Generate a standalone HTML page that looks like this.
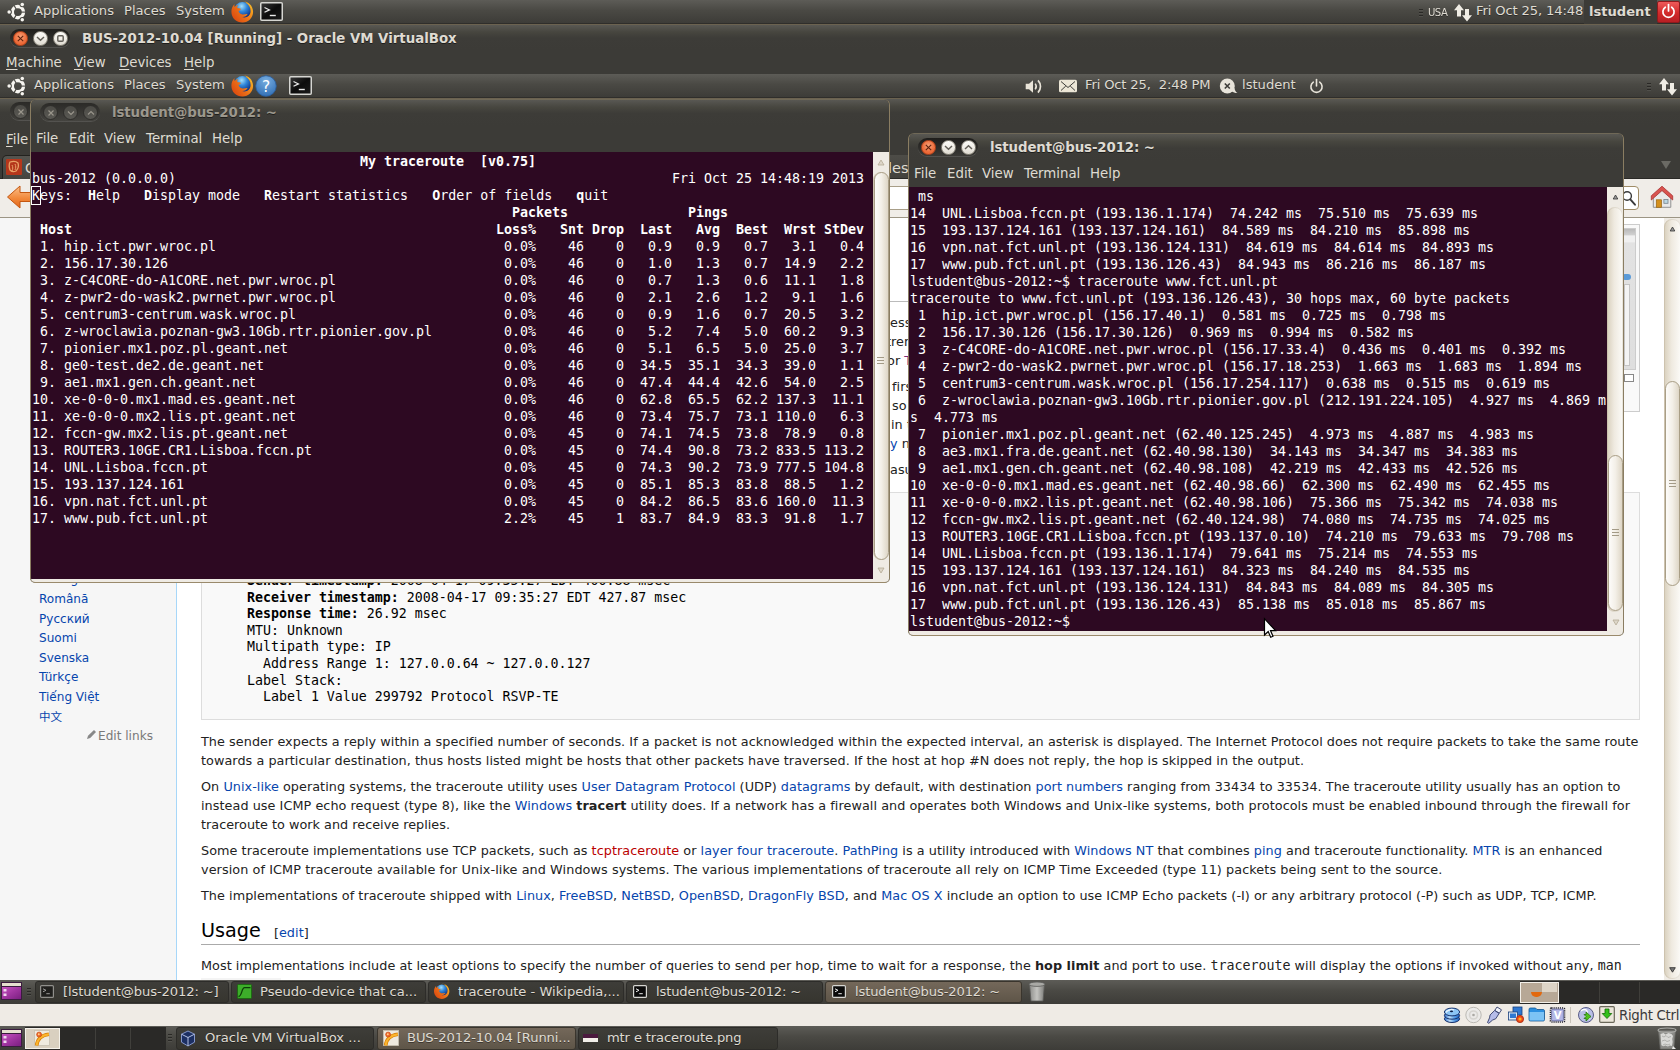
<!DOCTYPE html>
<html><head><meta charset="utf-8"><title>BUS-2012-10.04 [Running] - Oracle VM VirtualBox</title>
<style>
*{box-sizing:border-box}
html,body{margin:0;padding:0;width:1680px;height:1050px;overflow:hidden;background:#3c3b37}
body{position:relative;font-family:"DejaVu Sans","Liberation Sans",sans-serif;font-size:13px;color:#dfdbd2}
.abs{position:absolute}
.panel{position:absolute;left:0;width:1680px;background:linear-gradient(#5d5c57,#4a4944 45%,#3d3c38);}
.ptxt{position:absolute;white-space:nowrap;color:#dfdbd2;font-size:13.1px;line-height:16px;text-shadow:0 1px 0 rgba(0,0,0,.35)}
.tb{position:absolute;background:linear-gradient(#595853,#47463f 28%,#3d3c38 52%,#3c3b37);}
.title{position:absolute;white-space:nowrap;font-weight:bold;font-size:13.33px;line-height:16px;color:#dfdbd2;text-shadow:0 1px 0 rgba(0,0,0,.5)}
.mb{position:absolute;background:#3c3b37}
.mtxt{position:absolute;white-space:nowrap;font-size:13.33px;line-height:16px;color:#dfdbd2}
u{text-decoration:underline;text-underline-offset:2px}
.pill{position:absolute;height:18px;border-radius:10px;background:linear-gradient(#1f1e1c,#3a3935);box-shadow:0 1px 0 rgba(255,255,255,.12)}
.wb{position:absolute;width:15px;height:15px;border-radius:50%;top:1.5px}
.wb.c{background:radial-gradient(circle at 50% 38%,#f8a27a,#ee6f3e 55%,#e25927);border:1px solid #b5441c}
.wb.l{background:linear-gradient(#fcfbf8,#efece5 55%,#dedad0);border:1px solid #8d897e}
.wb.d{background:linear-gradient(#4b4a45,#5a5954);border:1px solid #2f2e2b}
.wb svg{position:absolute;left:0;top:0}
.term{position:absolute;background:#2d0922;color:#fff;font-family:"DejaVu Sans Mono","Liberation Mono",monospace;font-size:13.3px;letter-spacing:-.0054px;line-height:17px;overflow:hidden}
.term .ln{height:17px;white-space:pre}
.term b{font-weight:bold}
.term i{font-style:normal;outline:1px solid #fff;outline-offset:0;display:inline-block;height:17px}
.win{position:absolute;background:#3c3b37;border:1px solid #8a7d62;border-top-color:#6f6857;border-bottom-color:#9a8a6c;border-radius:6px 6px 5px 5px;overflow:hidden}
.sb{position:absolute;background:#efebe4}
.trough{position:absolute;border-radius:8px;background:linear-gradient(90deg,#d8cfbc,#efeae0 45%,#fcfbf8);box-shadow:inset 0 0 0 1px rgba(150,135,105,.18)}
.thumb{position:absolute;border:1px solid #a99e86;border-radius:8px;background:linear-gradient(90deg,#fdfcfa,#f3efe7 50%,#ded6c6)}
.wiki{position:absolute;font-size:12.8px;line-height:19.2px;color:#222;letter-spacing:.055px}
.wiki p{margin:0;position:absolute;white-space:nowrap;left:0}
.wiki a{color:#0645ad;text-decoration:none}
.wiki a.new{color:#ba0000}
.side a{position:absolute;left:39px;color:#0645ad;font-size:12.05px;line-height:16px;white-space:nowrap;text-decoration:none}
.pre{position:absolute;font-family:"DejaVu Sans Mono","Liberation Mono",monospace;font-size:13.288px;line-height:16.6px;color:#000;white-space:pre}
.task{position:absolute;white-space:nowrap;font-size:13.1px;line-height:16px;color:#dfdbd2;text-shadow:0 1px 0 rgba(0,0,0,.4)}
</style></head>
<body>

<!-- ================= Firefox / wikipedia background (guest) ================= -->
<div id="guest" class="abs" style="left:0;top:98px;width:1680px;height:882px;background:#fff;overflow:hidden">
  <!-- firefox title bar + menubar -->
  <div class="tb" style="left:0;top:0;width:1680px;height:27px;border-top:1px solid #6b6250"></div>
  <div class="mb" style="left:0;top:27px;width:1680px;height:25px"></div>
  <div class="pill" style="left:10px;top:4px;width:60px;background:linear-gradient(#2b2a27,#403f3b)">
    <div class="wb d" style="left:2.5px"><svg width="15" height="15"><path d="M4.5 4.5l5 5M9.5 4.5l-5 5" stroke="#9a968c" stroke-width="1.2" fill="none"/></svg></div>
  </div>
  <div class="mtxt" style="left:6px;top:34px"><u>F</u>ile</div>
  <!-- tab bar -->
  <div class="abs" style="left:0;top:52px;width:1680px;height:29px;background:#3c3b37;border-bottom:1px solid #2a2926"></div>
  <div class="abs" style="left:2px;top:57px;width:240px;height:24px;background:linear-gradient(#55544f,#45443f);border:1px solid #23221f;border-bottom:0;border-radius:5px 5px 0 0"></div>
  <div class="abs" style="left:6px;top:61px;width:16px;height:16px;background:#b5371c;border-radius:1px"><svg width="16" height="16"><path d="M4 3c3-1 6-1 8 1 1 3 0 6-2 8-2 1-4 1-6-1-1-3-1-6 0-8z" fill="none" stroke="#e9a066" stroke-width="1.3"/><path d="M6 6c1 2 1 4 0 6M9 5c1 2 1 4 0 6" stroke="#e9a066" stroke-width="1" fill="none"/></svg></div>
  <div class="mtxt" style="left:25px;top:62px;font-size:14px">C</div>
  <div class="abs" style="left:700px;top:57px;width:215px;height:23px;background:linear-gradient(#4d4c47,#43423d);border-radius:0 5px 0 0"></div>
  <div class="mtxt" style="left:888px;top:62px;font-size:14.5px">les</div>
  <svg class="abs" style="left:1660px;top:62px" width="12" height="10"><path d="M1 1h10l-5 8z" fill="#6b6a64"/></svg>
  <!-- nav bar -->
  <div class="abs" style="left:0;top:81px;width:1680px;height:39px;background:#f0ede8;border-bottom:1px solid #9c9584"></div>
  <svg class="abs" style="left:6px;top:86px" width="28" height="26" viewBox="0 0 28 26"><defs><linearGradient id="og" x1="0" y1="0" x2="0" y2="1"><stop offset="0" stop-color="#fbc08a"/><stop offset=".55" stop-color="#f28a3c"/><stop offset="1" stop-color="#e1661a"/></linearGradient></defs><path d="M1.5 13L14 2v6.5h12v9H14V24z" fill="url(#og)" stroke="#c4560f" stroke-width="1"/></svg>
  <div class="abs" style="left:120px;top:88px;width:1290px;height:24px;background:#fff;border:1px solid #a89e88;border-radius:3px"></div>
  <div class="abs" style="left:1418px;top:88px;width:221px;height:24px;background:#fff;border:1px solid #a08c66;border-radius:4px"></div>
  <svg class="abs" style="left:1620px;top:91px" width="18" height="20" viewBox="0 0 18 20"><circle cx="7.100" cy="7" r="4.300" fill="none" stroke="#3a3a3a" stroke-width="1.400"/><path d="M10.300 10.300l4.700 5.400" stroke="#3a3a3a" stroke-width="1.900" stroke-linecap="round"/></svg>
  <svg class="abs" style="left:1650px;top:87px" width="24" height="24" viewBox="0 0 24 24"><path d="M3.300 12.500V22.300h17.500V12.500L12 5z" fill="#e9e9e9" stroke="#888" stroke-width=".9"/><path d="M12 1.200L1.300 10.800v4.200l10.700-9.400 10.700 9.400v-4.200z" fill="#d9534f" stroke="#a83232" stroke-width=".8"/><rect x="6.300" y="14.800" width="5.200" height="7.500" fill="#d4901e" stroke="#9a6410" stroke-width=".7"/><rect x="13.900" y="14.500" width="4.100" height="3.800" fill="#bcd9e4" stroke="#77808a" stroke-width=".8"/></svg>

  <!-- page -->
  <div class="abs" style="left:0;top:120px;width:1664px;height:762px;background:#fff"></div>
  <div class="abs" style="left:0;top:120px;width:176px;height:762px;background:#f6f6f6"></div>
  <div class="abs" style="left:176px;top:120px;width:1px;height:762px;background:#a7d7f9"></div>

  <!-- things peeking between / right of terminals -->
  <div class="abs" style="left:889px;top:203px;width:20px;height:1px;background:#bbb"></div>
  <div class="wiki" style="left:889px;top:0;width:20px;height:500px;overflow:hidden">
    <p style="top:215px;left:1px">ess</p><p style="top:234px;left:-3px">tren</p><p style="top:253px;left:-2px">or <a style="color:#7a2a7a">T</a></p>
    <p style="top:279px;left:3px">first</p><p style="top:298px;left:3px">so</p><p style="top:317px;left:2px">in t</p><p style="top:336px;left:1px"><a>y</a> n</p><p style="top:362px;left:1px">asu</p>
  </div>
  <!-- thumb box right -->
  <div class="abs" style="left:1580px;top:126px;width:60px;height:188px;background:#f9f9f9;border:1px solid #ccc"></div>
  <div class="abs" style="left:1584px;top:130px;width:52px;height:142px;background:linear-gradient(#b9b9b9,#cfcfcf 4%,#f0f0f0 5%,#f0f0f0 9%,#e2e2e2 10%,#dedede);border:1px solid #ccc"></div>
  <div class="abs" style="left:1622px;top:176px;width:9px;height:6px;border-radius:3px;background:#5b9bd8"></div>
  <div class="abs" style="left:1624px;top:186px;width:6px;height:82px;background:#f4f4f4;border:1px solid #c5c5c5"></div>
  <div class="abs" style="left:1624px;top:276px;width:10px;height:8px;border:1px solid #888;background:#fff"></div>
  <!-- pre box -->
  <div class="abs" style="left:201px;top:394px;width:1439px;height:228px;background:#f9f9f9;border:1px solid #ddd"></div>
  <div class="pre" style="left:247px;top:475px"><b>Sender timestamp:</b> 2008-04-17 09:35:27 EDT 400.88 msec
<b>Receiver timestamp:</b> 2008-04-17 09:35:27 EDT 427.87 msec
<b>Response time:</b> 26.92 msec
MTU: Unknown
Multipath type: IP
  Address Range 1: 127.0.0.64 ~ 127.0.0.127
Label Stack:
  Label 1 Value 299792 Protocol RSVP-TE</div>

  <!-- sidebar -->
  <div class="side">
    <a style="top:473px">Português</a>
    <a style="top:493px">Română</a>
    <a style="top:513px">Русский</a>
    <a style="top:532px">Suomi</a>
    <a style="top:552px">Svenska</a>
    <a style="top:571px">Türkçe</a>
    <a style="top:591px">Tiếng Việt</a>
    <a style="top:611px;font-family:'DejaVu Sans','Noto Sans CJK SC',sans-serif;font-size:11.5px">中文</a>
    <svg class="abs" style="left:86px;top:631px" width="11" height="11" viewBox="0 0 11 11"><path d="M1 10l1-3.200L8 1l2 2-5.800 6z" fill="#888"/></svg>
    <a style="top:630px;left:98px;color:#797979;font-size:12.1px">Edit links</a>
  </div>

  <!-- article text -->
  <div class="wiki" style="left:201px;top:0;width:1463px;height:882px">
    <p style="top:634px;letter-spacing:0.0523px">The sender expects a reply within a specified number of seconds. If a packet is not acknowledged within the expected interval, an asterisk is displayed. The Internet Protocol does not require packets to take the same route</p>
    <p style="top:653px;letter-spacing:0.0452px">towards a particular destination, thus hosts listed might be hosts that other packets have traversed. If the host at hop #N does not reply, the hop is skipped in the output.</p>
    <p style="top:679px;letter-spacing:0.0393px">On <a>Unix-like</a> operating systems, the traceroute utility uses <a>User Datagram Protocol</a> (UDP) <a>datagrams</a> by default, with destination <a>port numbers</a> ranging from 33434 to 33534. The traceroute utility usually has an option to</p>
    <p style="top:698px;letter-spacing:0.0523px">instead use ICMP echo request (type 8), like the <a>Windows</a> <b>tracert</b> utility does. If a network has a firewall and operates both Windows and Unix-like systems, both protocols must be enabled inbound through the firewall for</p>
    <p style="top:717px;letter-spacing:0.0114px">traceroute to work and receive replies.</p>
    <p style="top:743px;letter-spacing:0.0433px">Some traceroute implementations use TCP packets, such as <a class="new">tcptraceroute</a> or <a>layer four traceroute</a>. <a>PathPing</a> is a utility introduced with <a>Windows NT</a> that combines <a>ping</a> and traceroute functionality. <a>MTR</a> is an enhanced</p>
    <p style="top:762px;letter-spacing:0.0811px">version of ICMP traceroute available for Unix-like and Windows systems. The various implementations of traceroute all rely on ICMP Time Exceeded (type 11) packets being sent to the source.</p>
    <p style="top:788px;letter-spacing:0.0417px">The implementations of traceroute shipped with <a>Linux</a>, <a>FreeBSD</a>, <a>NetBSD</a>, <a>OpenBSD</a>, <a>DragonFly BSD</a>, and <a>Mac OS X</a> include an option to use ICMP Echo packets (-I) or any arbitrary protocol (-P) such as UDP, TCP, ICMP.</p>
    <p style="top:819px;font-size:19.2px;line-height:28px;color:#000;letter-spacing:0">Usage <span style="font-size:12.8px;letter-spacing:.05px;margin-left:7px;color:#222">[<a>edit</a>]</span></p>
    <div class="abs" style="left:0;top:846px;width:1439px;height:1px;background:#aaa"></div>
    <p style="top:858px;letter-spacing:0.0422px">Most implementations include at least options to specify the number of queries to send per hop, time to wait for a response, the <b>hop limit</b> and port to use. <span style="font-family:'DejaVu Sans Mono',monospace;font-size:13.3px;letter-spacing:0">traceroute</span> will display the options if invoked without any, <span style="font-family:'DejaVu Sans Mono',monospace;font-size:13.3px;letter-spacing:0">man</span></p>
    <div class="abs" style="left:0;top:880px;width:80px;height:3px;background:#f4f4f4"></div>
  </div>

  <!-- firefox scrollbar -->
  <div class="sb" style="left:1664px;top:120px;width:16px;height:762px"></div>
  <div class="trough" style="left:1664px;top:121px;width:17px;height:760px"></div>
  <svg class="abs" style="left:1669px;top:128px" width="7" height="6"><path d="M3.500 1L5.800 5H1.200z" fill="#999" stroke="#333" stroke-width=".8"/></svg>
  <div class="thumb" style="left:1665px;top:283px;width:15px;height:205px"></div>
  <div class="abs" style="left:1669px;top:382px;width:7px;height:1px;background:#a39a86;box-shadow:0 3px 0 #a39a86,0 6px 0 #a39a86"></div>
  <svg class="abs" style="left:1669px;top:869px" width="7" height="6"><path d="M.7 .7h5.600L3.500 5.200z" fill="#777" stroke="#333" stroke-width=".9"/></svg>
</div>

<!-- ================= Terminal 1 (mtr) ================= -->
<div class="win" style="left:30px;top:99px;width:860px;height:484px">
  <div class="tb" style="left:0;top:0;width:860px;height:26px"></div>
  <div class="mb" style="left:0;top:26px;width:860px;height:26px"></div>
  <div class="pill" style="left:9px;top:3px;width:60px;background:linear-gradient(#2b2a27,#44433f)">
    <div class="wb d" style="left:2.5px"><svg width="15" height="15"><path d="M4.500 4.500l5 5M9.500 4.500l-5 5" stroke="#9a968c" stroke-width="1.2" fill="none"/></svg></div>
    <div class="wb d" style="left:22.5px"><svg width="15" height="15"><path d="M4 5.500l3 3 3-3" stroke="#9a968c" stroke-width="1.2" fill="none"/></svg></div>
    <div class="wb d" style="left:42.5px"><svg width="15" height="15"><path d="M4 8.500l3-3 3 3" stroke="#9a968c" stroke-width="1.2" fill="none"/></svg></div>
  </div>
  <div class="title" style="left:81px;top:5px;color:#9c988d;letter-spacing:-.1px">lstudent@bus-2012: ~</div>
  <div class="mtxt" style="left:5px;top:31px">File</div>
  <div class="mtxt" style="left:38px;top:31px">Edit</div>
  <div class="mtxt" style="left:73px;top:31px">View</div>
  <div class="mtxt" style="left:115px;top:31px">Terminal</div>
  <div class="mtxt" style="left:181px;top:31px">Help</div>
  <div class="abs" style="left:0;top:52px;width:860px;height:433px;background:#efebe4"></div>
  <div class="term" style="left:0;top:52px;width:842px;height:427px;padding:1px 0 0 1px">
<div class="ln">                                         <b>My traceroute  [v0.75]</b></div>
<div class="ln">bus-2012 (0.0.0.0)                                                              Fri Oct 25 14:48:19 2013</div>
<div class="ln"><i>K</i>eys:  <b>H</b>elp   <b>D</b>isplay mode   <b>R</b>estart statistics   <b>O</b>rder of fields   <b>q</b>uit</div>
<div class="ln"><b>                                                            Packets               Pings</b></div>
<div class="ln"><b> Host                                                     Loss%   Snt Drop  Last   Avg  Best  Wrst StDev</b></div>
<div class="ln"> 1. hip.ict.pwr.wroc.pl                                    0.0%    46    0   0.9   0.9   0.7   3.1   0.4</div>
<div class="ln"> 2. 156.17.30.126                                          0.0%    46    0   1.0   1.3   0.7  14.9   2.2</div>
<div class="ln"> 3. z-C4CORE-do-A1CORE.net.pwr.wroc.pl                     0.0%    46    0   0.7   1.3   0.6  11.1   1.8</div>
<div class="ln"> 4. z-pwr2-do-wask2.pwrnet.pwr.wroc.pl                     0.0%    46    0   2.1   2.6   1.2   9.1   1.6</div>
<div class="ln"> 5. centrum3-centrum.wask.wroc.pl                          0.0%    46    0   0.9   1.6   0.7  20.5   3.2</div>
<div class="ln"> 6. z-wroclawia.poznan-gw3.10Gb.rtr.pionier.gov.pl         0.0%    46    0   5.2   7.4   5.0  60.2   9.3</div>
<div class="ln"> 7. pionier.mx1.poz.pl.geant.net                           0.0%    46    0   5.1   6.5   5.0  25.0   3.7</div>
<div class="ln"> 8. ge0-test.de2.de.geant.net                              0.0%    46    0  34.5  35.1  34.3  39.0   1.1</div>
<div class="ln"> 9. ae1.mx1.gen.ch.geant.net                               0.0%    46    0  47.4  44.4  42.6  54.0   2.5</div>
<div class="ln">10. xe-0-0-0.mx1.mad.es.geant.net                          0.0%    46    0  62.8  65.5  62.2 137.3  11.1</div>
<div class="ln">11. xe-0-0-0.mx2.lis.pt.geant.net                          0.0%    46    0  73.4  75.7  73.1 110.0   6.3</div>
<div class="ln">12. fccn-gw.mx2.lis.pt.geant.net                           0.0%    45    0  74.1  74.5  73.8  78.9   0.8</div>
<div class="ln">13. ROUTER3.10GE.CR1.Lisboa.fccn.pt                        0.0%    45    0  74.4  90.8  73.2 833.5 113.2</div>
<div class="ln">14. UNL.Lisboa.fccn.pt                                     0.0%    45    0  74.3  90.2  73.9 777.5 104.8</div>
<div class="ln">15. 193.137.124.161                                        0.0%    45    0  85.1  85.3  83.8  88.5   1.2</div>
<div class="ln">16. vpn.nat.fct.unl.pt                                     0.0%    45    0  84.2  86.5  83.6 160.0  11.3</div>
<div class="ln">17. www.pub.fct.unl.pt                                     2.2%    45    1  83.7  84.9  83.3  91.8   1.7</div>
  </div>
  <div class="sb" style="left:842px;top:52px;width:16px;height:427px"></div>
  <div class="trough" style="left:842px;top:72px;width:16px;height:388px"></div>
  <svg class="abs" style="left:846px;top:59px" width="8" height="7"><path d="M4 1L7 6H1z" fill="#ddd6c8" stroke="#b5ab95" stroke-width=".8"/></svg>
  <div class="thumb" style="left:843px;top:72px;width:15px;height:388px"></div>
  <div class="abs" style="left:846px;top:257px;width:7px;height:1px;background:#a39a86;box-shadow:0 3px 0 #a39a86,0 6px 0 #a39a86"></div>
  <svg class="abs" style="left:846px;top:467px" width="8" height="7"><path d="M1 1h6L4 6z" fill="#ddd6c8" stroke="#b5ab95" stroke-width=".8"/></svg>
</div>

<!-- ================= Terminal 2 (traceroute) ================= -->
<div class="win" style="left:908px;top:133px;width:716px;height:503px">
  <div class="tb" style="left:0;top:0;width:715px;height:27px"></div>
  <div class="mb" style="left:0;top:27px;width:715px;height:26px"></div>
  <div class="pill" style="left:9px;top:4px;width:60px">
    <div class="wb c" style="left:2.5px"><svg width="15" height="15"><path d="M3.800 3.800l5.400 5.400M9.200 3.800l-5.400 5.400" stroke="#5e220e" stroke-width="1.100" fill="none"/></svg></div>
    <div class="wb l" style="left:22.5px"><svg width="15" height="15"><path d="M3 5l3.500 3.300L10 5" stroke="#625f58" stroke-width="1.450" fill="none"/></svg></div>
    <div class="wb l" style="left:42.5px"><svg width="15" height="15"><path d="M3 8l3.500-3.300L10 8" stroke="#625f58" stroke-width="1.450" fill="none"/></svg></div>
  </div>
  <div class="title" style="left:81px;top:6px;letter-spacing:-.1px">lstudent@bus-2012: ~</div>
  <div class="mtxt" style="left:5px;top:32px">File</div>
  <div class="mtxt" style="left:38px;top:32px">Edit</div>
  <div class="mtxt" style="left:73px;top:32px">View</div>
  <div class="mtxt" style="left:115px;top:32px">Terminal</div>
  <div class="mtxt" style="left:181px;top:32px">Help</div>
  <div class="abs" style="left:0;top:53px;width:715px;height:450px;background:#efebe4"></div>
  <div class="term" style="left:0;top:53px;width:698px;height:444px;padding:1px 0 0 1px">
<div class="ln"> ms</div>
<div class="ln">14  UNL.Lisboa.fccn.pt (193.136.1.174)  74.242 ms  75.510 ms  75.639 ms</div>
<div class="ln">15  193.137.124.161 (193.137.124.161)  84.589 ms  84.210 ms  85.898 ms</div>
<div class="ln">16  vpn.nat.fct.unl.pt (193.136.124.131)  84.619 ms  84.614 ms  84.893 ms</div>
<div class="ln">17  www.pub.fct.unl.pt (193.136.126.43)  84.943 ms  86.216 ms  86.187 ms</div>
<div class="ln">lstudent@bus-2012:~$ traceroute www.fct.unl.pt</div>
<div class="ln">traceroute to www.fct.unl.pt (193.136.126.43), 30 hops max, 60 byte packets</div>
<div class="ln"> 1  hip.ict.pwr.wroc.pl (156.17.40.1)  0.581 ms  0.725 ms  0.798 ms</div>
<div class="ln"> 2  156.17.30.126 (156.17.30.126)  0.969 ms  0.994 ms  0.582 ms</div>
<div class="ln"> 3  z-C4CORE-do-A1CORE.net.pwr.wroc.pl (156.17.33.4)  0.436 ms  0.401 ms  0.392 ms</div>
<div class="ln"> 4  z-pwr2-do-wask2.pwrnet.pwr.wroc.pl (156.17.18.253)  1.663 ms  1.683 ms  1.894 ms</div>
<div class="ln"> 5  centrum3-centrum.wask.wroc.pl (156.17.254.117)  0.638 ms  0.515 ms  0.619 ms</div>
<div class="ln"> 6  z-wroclawia.poznan-gw3.10Gb.rtr.pionier.gov.pl (212.191.224.105)  4.927 ms  4.869 m</div>
<div class="ln">s  4.773 ms</div>
<div class="ln"> 7  pionier.mx1.poz.pl.geant.net (62.40.125.245)  4.973 ms  4.887 ms  4.983 ms</div>
<div class="ln"> 8  ae3.mx1.fra.de.geant.net (62.40.98.130)  34.143 ms  34.347 ms  34.383 ms</div>
<div class="ln"> 9  ae1.mx1.gen.ch.geant.net (62.40.98.108)  42.219 ms  42.433 ms  42.526 ms</div>
<div class="ln">10  xe-0-0-0.mx1.mad.es.geant.net (62.40.98.66)  62.300 ms  62.490 ms  62.455 ms</div>
<div class="ln">11  xe-0-0-0.mx2.lis.pt.geant.net (62.40.98.106)  75.366 ms  75.342 ms  74.038 ms</div>
<div class="ln">12  fccn-gw.mx2.lis.pt.geant.net (62.40.124.98)  74.080 ms  74.735 ms  74.025 ms</div>
<div class="ln">13  ROUTER3.10GE.CR1.Lisboa.fccn.pt (193.137.0.10)  74.210 ms  79.633 ms  79.708 ms</div>
<div class="ln">14  UNL.Lisboa.fccn.pt (193.136.1.174)  79.641 ms  75.214 ms  74.553 ms</div>
<div class="ln">15  193.137.124.161 (193.137.124.161)  84.323 ms  84.240 ms  84.535 ms</div>
<div class="ln">16  vpn.nat.fct.unl.pt (193.136.124.131)  84.843 ms  84.089 ms  84.305 ms</div>
<div class="ln">17  www.pub.fct.unl.pt (193.136.126.43)  85.138 ms  85.018 ms  85.867 ms</div>
<div class="ln">lstudent@bus-2012:~$ </div>
  </div>
  <div class="sb" style="left:698px;top:53px;width:16px;height:444px"></div>
  <div class="trough" style="left:698px;top:73px;width:16px;height:405px"></div>
  <svg class="abs" style="left:703px;top:60px" width="7" height="6"><path d="M3.500 1L5.800 5H1.200z" fill="#999" stroke="#333" stroke-width=".8"/></svg>
  <div class="thumb" style="left:699px;top:321px;width:15px;height:156px"></div>
  <div class="abs" style="left:703px;top:395px;width:7px;height:1px;background:#a39a86;box-shadow:0 3px 0 #a39a86,0 6px 0 #a39a86"></div>
  <svg class="abs" style="left:703px;top:485px" width="8" height="7"><path d="M1 1h6L4 6z" fill="#ddd6c8" stroke="#b5ab95" stroke-width=".8"/></svg>
</div>

<!-- mouse cursor -->
<svg class="abs" style="left:1263px;top:617px" width="15" height="23" viewBox="0 0 15 23"><path d="M1.500 1.700v16.300l3.700-3.500 2.500 5.700 2.300-1-2.500-5.600h5z" fill="#fff" stroke="#000" stroke-width="1.200" stroke-linejoin="miter"/></svg>

<!-- ================= Host top panel ================= -->
<div class="panel" style="top:0;height:24px;border-bottom:1px solid #2f2e2b"></div>
<!-- VirtualBox title + menubar -->
<div class="tb" style="left:0;top:24px;width:1680px;height:26px;border-top:1px solid #6b6250"></div>
<div class="mb" style="left:0;top:50px;width:1680px;height:24px"></div>
<!-- Guest top panel -->
<div class="panel" style="top:74px;height:24px;border-bottom:1px solid #2f2e2b"></div>

<svg width="0" height="0" style="position:absolute"><defs>
  <g id="ubu"><mask id="um" maskUnits="userSpaceOnUse" x="-2" y="0" width="26" height="24"><rect x="-2" y="0" width="26" height="24" fill="#fff"/><path d="M9.90 12.10L18.90 12.10" stroke="#000" stroke-width="1.1"/><path d="M9.90 12.10L5.40 19.89" stroke="#000" stroke-width="1.1"/><path d="M9.90 12.10L5.40 4.31" stroke="#000" stroke-width="1.1"/><circle cx="1.15" cy="12.10" r="2.750" fill="#000"/><circle cx="14.28" cy="4.52" r="2.750" fill="#000"/><circle cx="14.28" cy="19.68" r="2.750" fill="#000"/></mask><circle cx="9.90" cy="12.10" r="5.600" fill="none" stroke="#f7f5f0" stroke-width="3.400" mask="url(#um)"/><circle cx="1.15" cy="12.10" r="1.750" fill="#f7f5f0"/><circle cx="14.28" cy="4.52" r="1.750" fill="#f7f5f0"/><circle cx="14.28" cy="19.68" r="1.750" fill="#f7f5f0"/></g>
  <radialGradient id="ffb" cx=".45" cy=".25" r=".7"><stop offset="0" stop-color="#a5e0f8"/><stop offset=".45" stop-color="#2f86da"/><stop offset="1" stop-color="#0f2f80"/></radialGradient>
  <linearGradient id="ffo" x1="0" y1=".9" x2="1" y2=".1"><stop offset="0" stop-color="#d9420d"/><stop offset=".45" stop-color="#ea6d18"/><stop offset=".8" stop-color="#f5a21e"/><stop offset="1" stop-color="#f9cf3a"/></linearGradient>
  <g id="ff"><circle cx="12.500" cy="10.500" r="8.500" fill="url(#ffb)"/><path d="M12.500 1.200c5.800 0 10.600 4.600 10.600 10.600 0 6-4.700 10.800-10.600 10.800C6.300 22.600 1.400 18 1.400 11.800c0-3.200 1.100-5.900 3.100-7.900-.3 1.500-.1 2.400.5 3.100.7-1.300 1.900-2 3.400-2.100-1 .9-1.400 2-.9 3.100 1.400.2 2.600.3 3.400.9-.3 1.200-1.600 1.500-2.400 2.200.4 1.600 1.500 2.800 3.200 3.200 2.700.6 4.500-.6 5.900-.2-.9 1.900-3 3-5.600 2.900 4.300 1.500 8.600-1.400 8.600-6.100 0-3.600-2-6.700-5.300-8.300 1 .1 2 .5 2.700 1-1.200-1.500-3.100-2.400-5.500-2.400z" fill="url(#ffo)"/></g>
  <linearGradient id="tg" x1="0" y1="0" x2="1" y2="1"><stop offset="0" stop-color="#3a3a3a"/><stop offset=".5" stop-color="#0c0c0c"/><stop offset="1" stop-color="#1c1c1c"/></linearGradient>
  <g id="tm"><rect x=".75" y=".75" width="21.500" height="17.500" rx="1" fill="url(#tg)" stroke="#d6d6d2" stroke-width="1.500"/><path d="M4.500 5.500l5 2.400-5 2.400" fill="none" stroke="#e8e8e8" stroke-width="1.200"/><path d="M9.800 13.500h6" stroke="#e8e8e8" stroke-width="1.400"/></g>
  <g id="tms"><rect x=".6" y=".6" width="12.800" height="11.800" rx="1" fill="#0b0b0b" stroke="#d6d6d2" stroke-width="1.200"/><path d="M3 3.800l3 1.500-3 1.500" fill="none" stroke="#e8e8e8" stroke-width="1"/><path d="M6.300 8.700h3.500" stroke="#e8e8e8" stroke-width="1"/></g>
  <g id="updn"><path d="M5 0l5 6.200H7V12.500H3V6.200H0z" fill="#efece4"/><path d="M13 17.500l-5-6.200h3V5h4v6.300h3z" fill="#efece4"/></g>
  <g id="grip"><path d="M0 1.500h4M0 4.500h4M0 7.500h4" stroke="#2a2926" stroke-width="1"/><path d="M0 2.500h4M0 5.500h4M0 8.500h4" stroke="#5a5954" stroke-width="1" opacity=".6"/></g>
  <linearGradient id="sdg" x1="0" y1="0" x2="1" y2="1"><stop offset="0" stop-color="#c554c0"/><stop offset=".5" stop-color="#a035a0"/><stop offset="1" stop-color="#7a1f80"/></linearGradient>
  <g id="sd"><rect x="0" y="0" width="21" height="18" fill="#3a1c3e"/><rect x="1" y="1" width="19" height="3" fill="#e6e0cf"/><rect x="1" y="5" width="19" height="12" fill="url(#sdg)"/><rect x="2.500" y="7" width="3" height="2.500" fill="#f0d8ee"/><rect x="2.500" y="11.500" width="3" height="2.500" fill="#f0d8ee"/></g>
  <linearGradient id="trg" x1="0" y1="0" x2="1" y2="0"><stop offset="0" stop-color="#8d8d8a"/><stop offset=".5" stop-color="#c4c4c0"/><stop offset="1" stop-color="#7d7d7a"/></linearGradient>
  <g id="trash"><path d="M1.500 3.500h15l-1.500 16.500h-12z" fill="url(#trg)" stroke="#5c5c59" stroke-width=".8"/><ellipse cx="9" cy="3.200" rx="8" ry="2.200" fill="#a9a9a5" stroke="#5c5c59" stroke-width=".8"/></g>
  <g id="vbi"><rect x=".5" y=".5" width="14" height="14" fill="#efeadf" stroke="#c9c2b2" stroke-width=".8"/><path d="M2.500 14.500c.5-5.500 4-9.500 11.500-10.500" fill="none" stroke="#d9820a" stroke-width="3.400"/><path d="M2.500 14.500c.5-5.500 4-9.500 11.500-10.500" fill="none" stroke="#fbb52e" stroke-width="2"/><circle cx="4.800" cy="4.300" r="2.300" fill="#f2682a" stroke="#c9480f" stroke-width=".7"/><circle cx="4.500" cy="4" r=".9" fill="#ffd08a"/></g>
</defs></svg>

<!-- host top panel -->
<svg class="abs" style="left:8px;top:0" width="20" height="24" viewBox="0 0 20 24" overflow="visible"><use href="#ubu"/></svg>
<div class="ptxt" style="left:34px;top:3px">Applications</div>
<div class="ptxt" style="left:124px;top:3px">Places</div>
<div class="ptxt" style="left:176px;top:3px">System</div>
<svg class="abs" style="left:230px;top:0" width="24" height="24" viewBox="0 0 24 24"><use href="#ff"/></svg>
<svg class="abs" style="left:260px;top:2px" width="23" height="19" viewBox="0 0 23 19"><use href="#tm"/></svg>
<svg class="abs" style="left:1419px;top:8px" width="5" height="10"><use href="#grip"/></svg>
<div class="ptxt" style="left:1428px;top:5px;font-size:11px;letter-spacing:-.6px;transform:scaleX(.92);transform-origin:0 0">USA</div>
<svg class="abs" style="left:1454px;top:4px" width="18" height="18" viewBox="0 0 18 18"><use href="#updn"/></svg>
<div class="ptxt" style="left:1476px;top:3px;letter-spacing:-.12px">Fri Oct 25, 14:48</div>
<div class="abs" style="left:1584px;top:0;width:73px;height:24px;background:#3c3b37"></div>
<div class="ptxt" style="left:1589px;top:4px;font-weight:bold;font-size:13.1px">lstudent</div>
<div class="abs" style="left:1657px;top:1px;width:23px;height:22px;border-radius:2px;background:linear-gradient(#ee5a5a,#d22a2a 55%,#b81f24);border:1px solid #8f1a1d"></div>
<svg class="abs" style="left:1660px;top:3px" width="17" height="17" viewBox="0 0 17 17"><path d="M5.300 4.200a5.600 5.600 0 1 0 6.400 0" fill="none" stroke="#fff" stroke-width="1.700" stroke-linecap="round"/><path d="M8.500 1.500v6.500" stroke="#fff" stroke-width="1.700" stroke-linecap="round"/></svg>

<!-- virtualbox title -->
<div class="pill" style="left:10px;top:29px;width:60px">
  <div class="wb c" style="left:2.5px"><svg width="15" height="15"><path d="M3.800 3.800l5.400 5.400M9.200 3.800l-5.400 5.400" stroke="#5e220e" stroke-width="1.100" fill="none"/></svg></div>
  <div class="wb l" style="left:22.5px"><svg width="15" height="15"><path d="M3 5l3.500 3.300L10 5" stroke="#625f58" stroke-width="1.450" fill="none"/></svg></div>
  <div class="wb l" style="left:42.5px"><svg width="15" height="15"><rect x="3.800" y="3.800" width="5.400" height="5.400" rx="1" stroke="#625f58" stroke-width="1.450" fill="none"/></svg></div>
</div>
<div class="title" style="left:82px;top:31px">BUS-2012-10.04 [Running] - Oracle VM VirtualBox</div>
<div class="mtxt" style="left:6px;top:55px"><u>M</u>achine</div>
<div class="mtxt" style="left:74px;top:55px"><u>V</u>iew</div>
<div class="mtxt" style="left:119px;top:55px"><u>D</u>evices</div>
<div class="mtxt" style="left:184px;top:55px"><u>H</u>elp</div>

<!-- guest top panel -->
<svg class="abs" style="left:8px;top:74px" width="20" height="24" viewBox="0 0 20 24" overflow="visible"><use href="#ubu"/></svg>
<div class="ptxt" style="left:34px;top:77px">Applications</div>
<div class="ptxt" style="left:124px;top:77px">Places</div>
<div class="ptxt" style="left:176px;top:77px">System</div>
<svg class="abs" style="left:230px;top:74px" width="24" height="24" viewBox="0 0 24 24"><use href="#ff"/></svg>
<svg class="abs" style="left:255px;top:75px" width="22" height="22" viewBox="0 0 22 22"><defs><radialGradient id="hg" cx=".5" cy=".25" r=".8"><stop offset="0" stop-color="#78aee0"/><stop offset="1" stop-color="#2f6cb3"/></radialGradient></defs><circle cx="11" cy="11" r="10.300" fill="url(#hg)" stroke="#2a5d9c" stroke-width=".8"/><text x="11" y="16.500" text-anchor="middle" font-family="DejaVu Sans, Liberation Sans, sans-serif" font-size="15.500" fill="#fff">?</text></svg>
<svg class="abs" style="left:289px;top:76px" width="23" height="19" viewBox="0 0 23 19"><use href="#tm"/></svg>
<svg class="abs" style="left:1025px;top:79px" width="18" height="15" viewBox="0 0 18 15"><path d="M.7 4.800h3.300L8 1.200v12.600L4 10.200H.7z" fill="#e9e4d8"/><path d="M10.200 4.600c1.300 1.700 1.300 4.100 0 5.800" fill="none" stroke="#e9e4d8" stroke-width="1.500"/><path d="M13 1.400c3.300 3.600 3.300 8.600 0 12.200" fill="none" stroke="#e9e4d8" stroke-width="1.700"/></svg>
<svg class="abs" style="left:1058px;top:79px" width="20" height="14" viewBox="0 0 20 14"><rect x="1" y=".8" width="18" height="12.500" rx="1.600" fill="#ece6d6"/><path d="M3 2.500l7 6 7-6M3 11.500l4.800-4.500M17 11.500l-4.800-4.500" fill="none" stroke="#3d3c38" stroke-width="1"/></svg>
<div class="ptxt" style="left:1085px;top:77px;letter-spacing:-.15px">Fri Oct 25,&nbsp; 2:48 PM</div>
<svg class="abs" style="left:1219px;top:78px" width="19" height="17" viewBox="0 0 19 17"><circle cx="8.300" cy="8" r="7.500" fill="#e8e4da"/><path d="M12 12.500c2 2 4 2.500 6.500 2.500-1.800-1-2.600-2.500-3-5z" fill="#e8e4da"/><path d="M5.800 5.500l5 5M10.800 5.500l-5 5" stroke="#3c3b37" stroke-width="1.600"/></svg>
<div class="ptxt" style="left:1242px;top:77px">lstudent</div>
<svg class="abs" style="left:1308px;top:78px" width="17" height="17" viewBox="0 0 17 17"><path d="M5.300 4.200a5.600 5.600 0 1 0 6.400 0" fill="none" stroke="#e8e4da" stroke-width="1.600" stroke-linecap="round"/><path d="M8.500 1.500v6.500" stroke="#e8e4da" stroke-width="1.600" stroke-linecap="round"/></svg>
<svg class="abs" style="left:1647px;top:82px" width="5" height="10"><use href="#grip"/></svg>
<svg class="abs" style="left:1659px;top:78px" width="18" height="18" viewBox="0 0 18 18"><use href="#updn"/></svg>

<!-- guest bottom panel -->
<div class="panel" style="top:980px;height:24px"></div>
<svg class="abs" style="left:1px;top:982px" width="21" height="18" viewBox="0 0 21 18"><use href="#sd"/></svg>
<svg class="abs" style="left:27px;top:987px" width="5" height="10"><use href="#grip"/></svg>
<div class="abs" style="left:35px;top:981px;width:194px;height:22px;border-radius:3px;background:linear-gradient(#3e3d39,#36352f);border:1px solid #2d2c29"></div>
<svg class="abs" style="left:40px;top:985px;opacity:.55" width="14" height="13" viewBox="0 0 14 13"><use href="#tms"/></svg>
<div class="task" style="left:63px;top:984px;letter-spacing:-0.110px">[lstudent@bus-2012: ~]</div>
<div class="abs" style="left:231px;top:981px;width:195px;height:22px;border-radius:3px;background:linear-gradient(#3e3d39,#36352f);border:1px solid #2d2c29"></div>
<svg class="abs" style="left:237px;top:984px" width="15" height="15" viewBox="0 0 15 15"><rect x=".5" y=".5" width="14" height="14" rx="1" fill="#3dae2a" stroke="#1d6a12"/><path d="M1.500 12.500c3.500 0 3-8.800 6-8.800h6" fill="none" stroke="#0c3d08" stroke-width="1.300"/></svg>
<div class="task" style="left:260px;top:984px;letter-spacing:-0.030px">Pseudo-device that ca...</div>
<div class="abs" style="left:428px;top:981px;width:196px;height:22px;border-radius:3px;background:linear-gradient(#3e3d39,#36352f);border:1px solid #2d2c29"></div>
<svg class="abs" style="left:433px;top:983px" width="17" height="17" viewBox="0 0 24 24"><use href="#ff"/></svg>
<div class="task" style="left:458px;top:984px">traceroute - Wikipedia,...</div>
<div class="abs" style="left:626px;top:981px;width:197px;height:22px;border-radius:3px;background:linear-gradient(#3e3d39,#36352f);border:1px solid #2d2c29"></div>
<svg class="abs" style="left:633px;top:985px" width="14" height="13" viewBox="0 0 14 13"><use href="#tms"/></svg>
<div class="task" style="left:656px;top:984px;letter-spacing:-0.130px">lstudent@bus-2012: ~</div>
<div class="abs" style="left:825px;top:981px;width:197px;height:22px;border-radius:3px;background:linear-gradient(#74685a,#5e5548);border:1px solid #3a352d"></div>
<svg class="abs" style="left:832px;top:985px" width="14" height="13" viewBox="0 0 14 13"><use href="#tms"/></svg>
<div class="task" style="left:855px;top:984px;letter-spacing:-0.130px">lstudent@bus-2012: ~</div>
<svg class="abs" style="left:1028px;top:981px" width="18" height="21" viewBox="0 0 18 21"><use href="#trash"/></svg>
<!-- guest workspace switcher -->
<div class="abs" style="left:1520px;top:981px;width:160px;height:23px;background:#2a2927"></div>
<div class="abs" style="left:1520px;top:982px;width:39px;height:21px;background:#b7a896;border:1px solid #f2efe8"></div>
<div class="abs" style="left:1542px;top:983px;width:15px;height:9px;background:#ddd4c6"></div>
<div class="abs" style="left:1531px;top:992px;width:11px;height:5px;border-radius:0 0 6px 6px;background:#e2690f"></div>
<div class="abs" style="left:1599px;top:982px;width:1px;height:21px;background:#3f3e3a"></div>
<div class="abs" style="left:1639px;top:982px;width:1px;height:21px;background:#3f3e3a"></div>

<!-- virtualbox status bar -->
<div class="abs" style="left:0;top:1004px;width:1680px;height:22px;background:#efebe5"></div>
<svg class="abs" style="left:1443px;top:1006px" width="18" height="18" viewBox="0 0 18 18"><defs><linearGradient id="hd1" x1="0" y1="0" x2="1" y2="0"><stop offset="0" stop-color="#2a6fd0"/><stop offset=".35" stop-color="#bfe0fb"/><stop offset=".7" stop-color="#4d97e6"/><stop offset="1" stop-color="#1f5cb8"/></linearGradient></defs><ellipse cx="9" cy="12.800" rx="7.600" ry="3.700" fill="url(#hd1)" stroke="#16306a" stroke-width="1"/><ellipse cx="9" cy="9.500" rx="7.600" ry="3.700" fill="url(#hd1)" stroke="#16306a" stroke-width="1"/><ellipse cx="9" cy="6" rx="7.600" ry="3.900" fill="#8cc4f5" stroke="#16306a" stroke-width="1"/><path d="M3 6.500c1-2.500 5-3.500 8-2.600" fill="none" stroke="#e6f3ff" stroke-width="1.500"/><ellipse cx="8.500" cy="5.300" rx="1.600" ry=".9" fill="#0c1c44"/></svg>
<svg class="abs" style="left:1465px;top:1006px" width="17" height="18" viewBox="0 0 17 18"><circle cx="8.500" cy="9" r="7.700" fill="#ebeae8" stroke="#b5b3ae" stroke-width=".9"/><circle cx="8.500" cy="9" r="4" fill="none" stroke="#d6d4d0" stroke-width="1.600"/><circle cx="8.500" cy="9" r="1.300" fill="#aaa8a3"/></svg>
<svg class="abs" style="left:1486px;top:1006px" width="17" height="18" viewBox="0 0 17 18"><path d="M11 1l4.500 2.800-2.200 3.400-4.500-2.800z" fill="#f2f4fb" stroke="#2f3a66" stroke-width=".9"/><path d="M8.600 4.500l4.500 2.900-3.300 5.300-3.300 1.400-3.700 3.200-1.300-.8 2-4.600.6-3z" fill="#b5bce8" stroke="#2f3a66" stroke-width=".9"/></svg>
<svg class="abs" style="left:1507px;top:1006px" width="18" height="18" viewBox="0 0 18 18"><rect x="6" y="1" width="9" height="8" fill="#2f78d2" stroke="#173f7c" stroke-width=".8"/><rect x="1.500" y="6" width="9" height="8" fill="#dfe9f6" stroke="#173f7c" stroke-width=".8"/><rect x="3" y="7.500" width="6" height="4.500" fill="#2f78d2"/><circle cx="13" cy="13" r="3.600" fill="#f0481c" stroke="#a02808" stroke-width=".8"/><circle cx="13" cy="13" r="1.600" fill="#ffb21c"/></svg>
<svg class="abs" style="left:1528px;top:1006px" width="17" height="16" viewBox="0 0 17 16"><path d="M1 3.500c0-1 .5-1.500 1.500-1.500h5l1.500 1.500h6c1 0 1.500.5 1.500 1.500v8.500c0 1-.5 1.500-1.500 1.500h-12.500c-1 0-1.500-.5-1.500-1.500z" fill="#2b8fe0" stroke="#17558f" stroke-width=".8"/><path d="M1.500 6h14.500v7.500c0 .8-.4 1-1 1h-12.500c-.6 0-1-.2-1-1z" fill="#7cc3f5"/></svg>
<svg class="abs" style="left:1549px;top:1006px" width="17" height="18" viewBox="0 0 17 18"><rect x="1.500" y="2" width="14" height="14" rx="1" fill="none" stroke="#1e1e2c" stroke-width="1.600" stroke-dasharray="1.100 1"/><rect x="2.600" y="3.100" width="11.800" height="11.800" rx="1.200" fill="#b3b7e6" stroke="#5a5f96" stroke-width=".8"/><text x="8.500" y="12.800" text-anchor="middle" font-family="DejaVu Sans, Liberation Sans, sans-serif" font-weight="bold" font-size="10" fill="#fff">V</text></svg>
<div class="abs" style="left:1570px;top:1007px;width:1px;height:16px;background:#c9c4ba"></div>
<svg class="abs" style="left:1577px;top:1006px" width="18" height="18" viewBox="0 0 18 18"><circle cx="9" cy="9" r="7.500" fill="#b9bfe6" stroke="#4b4f7d" stroke-width=".9"/><path d="M4 5c2-2 5-2 6 0s-2 4-1 6 3 2 4 1" fill="none" stroke="#fff" stroke-width="1.400"/><path d="M9 6l5 4.500-5 4.500v-2.500H7l2-2-2-2h2z" fill="#4fc21f" stroke="#1f6a0a" stroke-width=".7"/></svg>
<svg class="abs" style="left:1599px;top:1006px" width="16" height="17" viewBox="0 0 16 17"><rect x=".7" y=".7" width="14.600" height="15.600" rx="1" fill="#ebe6da" stroke="#6a6759" stroke-width="1.200"/><path d="M6 3h4v4.500h2.800L8 12.500 3.200 7.500H6z" fill="#33c01a" stroke="#136a06" stroke-width=".8"/></svg>
<div id="rc" class="abs" style="left:1619px;top:1008px;white-space:nowrap;font-size:13.33px;line-height:16px;color:#3a3a3a;letter-spacing:-.3px">Right Ctrl</div>

<!-- host bottom panel -->
<div class="panel" style="top:1026px;height:24px"></div>
<svg class="abs" style="left:1px;top:1029px" width="21" height="18" viewBox="0 0 21 18"><use href="#sd"/></svg>
<div class="abs" style="left:25px;top:1027px;width:141px;height:23px;background:#2a2927"></div>
<div class="abs" style="left:25px;top:1028px;width:35px;height:21px;background:#d9d0c0;border:1px solid #f4f1ea"></div>
<svg class="abs" style="left:34px;top:1030px" width="16" height="16" viewBox="0 0 15 15"><use href="#vbi"/></svg>
<div class="abs" style="left:95px;top:1028px;width:1px;height:21px;background:#403f3b"></div>
<div class="abs" style="left:130px;top:1028px;width:1px;height:21px;background:#403f3b"></div>
<svg class="abs" style="left:168px;top:1033px" width="5" height="10"><use href="#grip"/></svg>
<div class="abs" style="left:176px;top:1027px;width:198px;height:23px;border-radius:3px;background:linear-gradient(#3e3d39,#36352f);border:1px solid #2d2c29"></div>
<svg class="abs" style="left:180px;top:1030px" width="16" height="17" viewBox="0 0 16 17"><path d="M8 1l6.500 3.200v8L8 16 1.500 12.200v-8z" fill="#1c2f63" stroke="#8fa2d8" stroke-width=".9"/><path d="M1.500 4.200L8 7.500l6.500-3.300M8 7.500V16" fill="none" stroke="#c8d2f0" stroke-width=".9"/></svg>
<div class="task" style="left:205px;top:1030px;letter-spacing:0.040px">Oracle VM VirtualBox ...</div>
<div class="abs" style="left:377px;top:1027px;width:199px;height:23px;border-radius:3px;background:linear-gradient(#74685a,#5e5548);border:1px solid #3a352d"></div>
<svg class="abs" style="left:383px;top:1030px" width="16" height="16" viewBox="0 0 15 15"><use href="#vbi"/></svg>
<div class="task" style="left:407px;top:1030px;letter-spacing:-0.100px">BUS-2012-10.04 [Runni...</div>
<div class="abs" style="left:578px;top:1027px;width:200px;height:23px;border-radius:3px;background:linear-gradient(#3e3d39,#36352f);border:1px solid #2d2c29"></div>
<div class="abs" style="left:583px;top:1034px;width:15px;height:8px;background:#f1eee8;border-top:4px solid #4a1a3e"></div>
<div class="task" style="left:607px;top:1030px;letter-spacing:-0.135px">mtr e traceroute.png</div>
<svg class="abs" style="left:1657px;top:1027px" width="20" height="23" viewBox="0 0 20 23"><path d="M1.500 3.500h17l-1.800 18.500h-13.400z" fill="#8b8b87" stroke="#6a6a66" stroke-width=".8"/><path d="M3.500 7l3-1 2 1.500 3-1.500 3 1 1.500 2-.8 3 .5 3-.8 4-2-.5-2 1-2.500-1-2 .8-2-1z" fill="#d9d9d6"/><path d="M5 9l2 1 2-1.500 2 2 3-1M5 14l3-1 2 1.500 3-1M6 18l2-1 3 1 2-1" fill="none" stroke="#a5a5a1" stroke-width=".8"/><ellipse cx="10" cy="3.200" rx="9" ry="2.200" fill="none" stroke="#a9a9a5" stroke-width="1.200"/><path d="M16 19l3 3h-4z" fill="#e8e8e6"/></svg>


</body></html>
